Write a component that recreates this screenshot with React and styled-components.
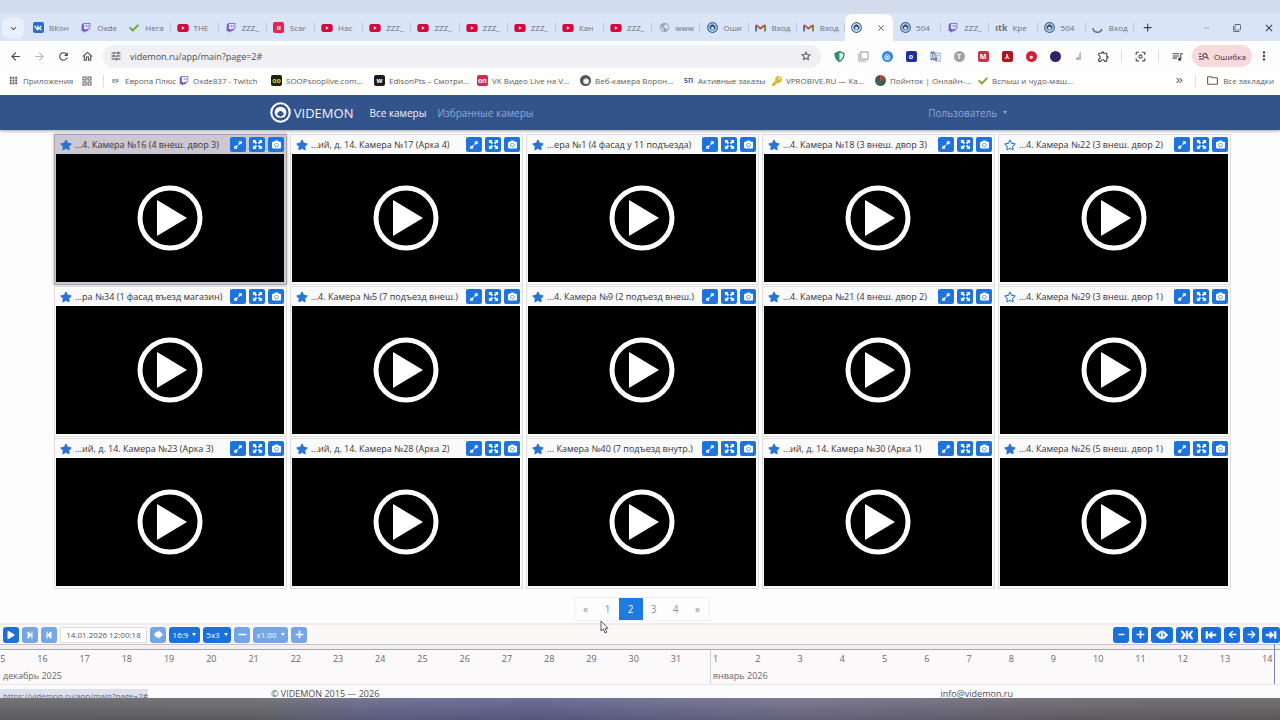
import React, { useState } from 'react';
import styled, { createGlobalStyle } from 'styled-components';
import { SiTwitch } from 'react-icons/si';
import {
    FaVk, FaYoutube, FaStar, FaRegStar, FaCamera, FaPlay, FaStepBackward, FaStepForward,
    FaMinus, FaPlus, FaArrowLeft, FaArrowRight, FaCheck, FaKey, FaShieldAlt,
} from 'react-icons/fa';
import {
    MdArrowBack, MdArrowForward, MdRefresh, MdOutlineHome, MdStarBorder, MdApps, MdMoreVert,
    MdOutlineExtension, MdKeyboardArrowDown, MdClose, MdAdd, MdQueueMusic, MdOutlineFolder,
    MdKeyboardDoubleArrowRight, MdGTranslate, MdPublic, MdOutlineCenterFocusWeak,
    MdOutlineGridView, MdTune, MdManageSearch, MdRemove, MdOutlineFilterNone,
} from 'react-icons/md';


const GlobalStyle = createGlobalStyle`
    * {
        box-sizing: border-box;
    }
    body {
        margin: 0;
        background: #fefdfd;
        font-family: "Open Sans", "Noto Sans", sans-serif;
        color: #3c3c42;
    }
    button, input {
        font-family: inherit;
        margin: 0;
        padding: 0;
        border: 0;
    }
    button {
        background: none;
        display: flex;
        align-items: center;
        justify-content: center;
        color: inherit;
    }
    a {
        color: inherit;
        text-decoration: none;
    }
    svg {
        display: block;
        flex: none;
    }
`

const Page = styled.div`
    height: 100vh;
    display: flex;
    flex-direction: column;
    overflow: hidden;
`

/* browser window */
const TabStrip = styled.div`
    display: flex;
    align-items: flex-end;
    height: 41px;
    padding-left: 2px;
    background: linear-gradient(#d2dcea 0 13px, #d9e4f6 14px);
`

const TabSearch = styled.button`
    width: 22px;
    height: 22px;
    margin-bottom: 2px;
    border-radius: 8px;
    background: #e9f0fa;
    font-size: 11px;
`

const Tabs = styled.div`
    flex: 1;
    display: flex;
    padding-left: 2px;
    min-width: 0;
`

const Tab = styled.a`
    flex: 1 1 0;
    min-width: 0;
    height: 27px;
    display: flex;
    align-items: center;
    gap: 5px;
    padding-left: 6px;
    overflow: hidden;
    white-space: nowrap;
    font-size: 9px;
    color: #6a7078;
    border-radius: 7px 7px 0 0;
    background: ${(props) => (props.$active ? '#fdfdfe' : 'transparent')};
`

const TabIcon = styled.span`
    flex: none;
    display: flex;
    justify-content: center;
    width: 12px;
`

const TabTitle = styled.span`
    font-size: 8px;
`

const TabEdge = styled.i`
    margin-left: auto;
    width: 1px;
    height: 9px;
    background: #bcc8da;
`

const TabClose = styled.button`
    margin: 0 7px 0 auto;
    font-size: 10px;
`

const WindowButtons = styled.div`
    display: flex;
    align-items: center;
    justify-content: space-between;
    width: 146px;
    height: 27px;
    padding: 0 5px 0 7px;
    font-size: 13px;

    button:nth-child(2) {
        margin-left: 26px;
        color: #a5adba;
    }
`

const AddressRow = styled.div`
    display: flex;
    align-items: center;
    height: 30px;
    padding: 0 4px 0 3px;
    background: #fdfdfe;
`

const ToolButton = styled.button`
    width: 24px;
    height: 24px;
    font-size: 13px;
    color: ${(props) => props.$color || '#46474c'};
`

const Omnibox = styled.label`
    flex: 1;
    display: flex;
    align-items: center;
    gap: 8px;
    height: 23px;
    margin: 0 6px 0 4px;
    padding: 0 9px 0 7px;
    border-radius: 12px;
    background: #f0f0f4;
    font-size: 12px;

    input {
        flex: 1;
        min-width: 0;
        background: none;
        font-size: 9px;
        color: #4b4b52;
        outline: none;
    }
`

const Separator = styled.span`
    width: 1px;
    height: 12px;
    margin: 0 6px;
    background: #dcdde4;
`

const ErrorPill = styled.button`
    gap: 4px;
    width: 60px;
    height: 22px;
    margin-left: 3px;
    border-radius: 11px;
    background: #f6d9da;
    font-size: 8px;
    color: #4a2c2e;
`

const MenuButton = styled.button`
    width: 24px;
    font-size: 14px;
`

const Bookmarks = styled.nav`
    display: flex;
    align-items: center;
    height: 24px;
    padding: 0 6px 5px 8px;
    background: #fefefd;
    font-size: 8px;
    color: #5c5c62;
    white-space: nowrap;
`

const Bookmark = styled.a`
    display: flex;
    align-items: center;
    gap: 4px;
    width: ${(props) => props.$width}px;
`

const BookmarksEnd = styled.div`
    display: flex;
    align-items: center;
    gap: 4px;
    margin-left: auto;
`

const Chip = styled.span`
    display: inline-flex;
    align-items: center;
    justify-content: center;
    flex: none;
    width: 11px;
    height: 11px;
    border-radius: ${(props) => (props.$round ? '50%' : '2px')};
    background: ${(props) => props.$bg};
    color: ${(props) => props.$color || '#fff'};
    font-size: 7px;
    font-weight: 700;
    line-height: 1;
`

/* site */
const Site = styled.div`
    position: relative;
    flex: 1;
    min-height: 0;
    display: flex;
    flex-direction: column;
    overflow: hidden;
`

const Navbar = styled.header`
    display: flex;
    align-items: center;
    flex: none;
    height: 35px;
    padding: 0 21%;
    background: #32538c;
    box-shadow: 0 1px 3px rgba(0, 0, 0, 0.35);
    font-size: 10px;
    color: #94a9d3;
`

const Brand = styled.a`
    display: flex;
    align-items: center;
    gap: 3px;
    margin: 0 16px 0 1px;
    font-size: 13px;
    color: #f2f5fb;
`

const NavLink = styled.a`
    margin-right: 11px;
    color: ${(props) => (props.$active ? '#f5f7fc' : '#94a9d3')};
`

const UserMenu = styled.button`
    gap: 6px;
    margin: 0 4px 0 auto;
    font-size: 10px;
`

const Caret = styled.span`
    border: 2px solid transparent;
    border-top: 3px solid currentColor;
    border-bottom: 0;
`

const Cameras = styled.main`
    display: grid;
    grid-template-columns: repeat(5, 1fr);
    gap: 1px 3px;
    padding: 4px 49px 0 54px;
`

const Card = styled.article`
    padding: 0 2px 2px 1px;
    border: 1px solid ${(props) => (props.$selected ? '#aaa3ae' : '#dedcdf')};
    background: ${(props) => (props.$selected ? '#cdc7d1' : '#fbfafb')};
    box-shadow: ${(props) => (props.$selected ? '0 0 3px rgba(70, 60, 80, 0.4)' : 'none')};
`

const CardHead = styled.div`
    display: flex;
    align-items: center;
    gap: 3px;
    height: 19px;
    padding-left: 4px;
    color: #34343a;
    white-space: nowrap;

    h2 {
        flex: 1;
        min-width: 0;
        margin: 0;
        font-size: 9px;
        font-weight: 400;
        line-height: 14px;
    }
`

const StarButton = styled.button`
    font-size: 12px;
    color: #2b75d2;
`

const CardButton = styled.button`
    width: 16px;
    height: 15px;
    border-radius: 2px;
    background: #1f74dc;
    color: #fff;
    font-size: 9px;
`

const Video = styled.button`
    width: 100%;
    height: 128px;
    background: #000;
`

const Pagination = styled.nav`
    display: flex;
    align-self: center;
    margin: 8px 0 2px 3px;
    border: 1px solid #efeef0;
`

const PageLink = styled.a`
    width: ${(props) => (props.$active ? 24 : 22)}px;
    line-height: 22px;
    text-align: center;
    font-size: 10px;
    color: ${(props) => (props.$active ? '#fff' : '#8c9096')};
    background: ${(props) => (props.$active ? '#1f7ae4' : 'transparent')};
`

const PlayerBar = styled.div`
    display: flex;
    align-items: center;
    gap: 3px;
    flex: none;
    height: 22px;
    padding-left: 3px;
    border-top: 2px solid #efebed;
    border-bottom: 1px solid #c9c6c9;
    background: #fbf8f8;
    overflow: hidden;
`

const BarButton = styled.button`
    flex: none;
    gap: 4px;
    width: ${(props) => props.$width || 16}px;
    height: 16px;
    border-radius: 3px;
    background: #1b71da;
    color: #fff;
    font-size: 8px;
    opacity: ${(props) => (props.disabled ? 0.6 : 1)};
`

const TimeInput = styled.input`
    width: 87px;
    height: 16px;
    border: 1px solid #dedce0;
    background: #fff;
    text-align: center;
    font-size: 8px;
    color: #55555b;
`

const Spacer = styled.div`
    flex: 1;
`

const Timeline = styled.div`
    position: relative;
    display: flex;
    flex: none;
    height: 40px;
    padding-top: 1px;
    border-top: 4px solid #f3eff1;
    border-bottom: 1px solid #e8e6e9;
    background: #fcf9fa;
    font-size: 9px;
    color: #66666c;
    box-shadow: inset 0 1px #aaa7aa;
`

const Month = styled.section`
    flex: none;
    margin-left: ${(props) => (props.$cut ? -8 : 0)}px;
    box-shadow: inset 1px 0 #d4d1d5;

    p {
        margin: 0;
        padding: 3px 0 0 ${(props) => (props.$cut ? 11 : 3)}px;
        line-height: 12px;
    }
`

const Days = styled.div`
    display: flex;
    line-height: 17px;

    span {
        width: 3.3vw;
        padding-left: 3px;
    }
`

const NowLine = styled.div`
    position: absolute;
    top: -5px;
    right: 5px;
    width: 1px;
    height: 40px;
    background: #8480b8;
`

const Footer = styled.footer`
    display: flex;
    flex: none;
    justify-content: space-between;
    padding: 0 267px 0 271px;
    font-size: 9px;
    line-height: 17px;
    color: #515158;
    background: #fbfafc;
`

const StatusBubble = styled.div`
    position: absolute;
    left: 0;
    bottom: -6px;
    width: 148px;
    height: 15px;
    padding-left: 3px;
    line-height: 14px;
    font-size: 8px;
    white-space: nowrap;
    background: #dfe0ee;
    color: #5d6070;
`

const Pointer = styled.svg`
    position: absolute;
    top: 525px;
    left: 600px;
`

const Taskbar = styled.div`
    flex: none;
    height: 22px;
    background:
        linear-gradient(rgba(255, 255, 255, 0.12), rgba(0, 0, 0, 0.08)),
        linear-gradient(90deg, #626266 0, #636367 20%, #626286 28%, #595d88 42%, #626388 50%, #6d6985 62%, #696578 72%, #646168 84%, #625f60 100%);
`


const Logo = ({ size = 11, color = '#315b8e' }) => (
    <svg width={size} height={size} viewBox="0 0 20 20">
        <circle cx="10" cy="10" r="8.8" fill="none" stroke={color} strokeWidth="2" />
        <path d="M5.8 13.8A5.6 5.6 0 1 1 14.2 13.8C12.8 15.5 7.2 15.5 5.8 13.8Z" fill={color} />
        <path d="M6.8 12.2Q7.5 8.5 10 8.5Q12.5 8.5 13.2 12.2L10 14Z" fill={color === '#fff' ? '#32538c' : '#dbe5f5'} />
    </svg>
)

const Gmail = () => (
    <svg width="11" height="9" viewBox="0 0 22 18" fill="none" strokeWidth="4">
        <path d="M2 17V4" stroke="#4878c8" />
        <path d="M20 17V4" stroke="#4b9b63" />
        <path d="M2 4L11 11L20 4" stroke="#d64b43" />
    </svg>
)

const Spinner = () => (
    <svg width="11" height="11" viewBox="0 0 12 12">
        <path d="M1 6.5A5 5 0 0 0 10.8 7.5" fill="none" stroke="#536b9b" strokeWidth="1.6" />
    </svg>
)

const Diagonal = () => (
    <svg width="10" height="10" viewBox="0 0 12 12" fill="#fff">
        <path d="M6.5 1.5H10.5V5.5L9.2 4.2L7.3 6.1L5.9 4.7L7.8 2.8Z" />
        <path d="M5.5 10.5H1.5V6.5L2.8 7.8L4.7 5.9L6.1 7.3L4.2 9.2Z" />
    </svg>
)

const Expand = () => (
    <svg width="11" height="11" viewBox="0 0 12 12" fill="#fff">
        {[0, 90, 180, 270].map(angle => (
            <path key={angle} transform={`rotate(${angle} 6 6)`} d="M1 1H4.7L3.7 2.2L5.6 4.1L4.1 5.6L2.2 3.7L1 4.7Z" />
        ))}
    </svg>
)

const PlayCircle = () => (
    <svg width="66" height="66" viewBox="0 0 66 66">
        <circle cx="33" cy="33" r="30" fill="none" stroke="#fff" strokeWidth="5" />
        <path d="M20 15V51L50 33Z" fill="#fff" />
    </svg>
)

const ZoomIcon = ({ paths }) => (
    <svg width="14" height="10" viewBox="0 0 14 10" fill="#fff" stroke="#fff" strokeWidth="0.6">
        <path d={paths} />
    </svg>
)

const yt = <FaYoutube size={12} color="#d5083c" />
const twitch = <SiTwitch size={10} color="#7a55c7" />

const tabs = [
    [<Chip $bg="#2a6fc4"><FaVk size={8} /></Chip>, 'ВКон'], [twitch, 'Oxde'], [<FaCheck size={10} color="#6ea83b" />, 'Нега'],
    [yt, 'THE'], [twitch, 'ZZZ_'], [<Chip $bg="#d72c59">ıı</Chip>, 'Scar'], [yt, 'Нас'], [yt, 'ZZZ_'],
    [yt, 'ZZZ_'], [yt, 'ZZZ_'], [yt, 'ZZZ_'], [yt, 'Кан'], [yt, 'ZZZ_'], [<MdPublic size={11} color="#9ba4ad" />, 'www'],
    [<Logo />, 'Оши'], [<Gmail />, 'Вход'], [<Gmail />, 'Вход'], [<Logo />, ''], [<Logo />, '504'],
    [twitch, 'ZZZ_'], [<b>ıtk</b>, 'Кре'], [<Logo />, '504'], [<Spinner />, 'Вход'],
]

const bookmarks = [
    { width: 69, icon: <Chip $bg="none" $color="#8b8f94">ᴇᴘ</Chip>, title: 'Европа Плюс' },
    { width: 92, icon: twitch, title: 'Oxde837 - Twitch' },
    { width: 103, icon: <Chip $bg="#1f2412" $color="#c6d93b">oo</Chip>, title: 'SOOPsooplive.com...' },
    { width: 103, icon: <Chip $bg="#1c1c1e">w</Chip>, title: 'EdisonPts – Смотри...' },
    { width: 103, icon: <Chip $bg="#d42a4e">on</Chip>, title: 'VK Видео Live на V...' },
    { width: 103, icon: <Chip $round $bg="#55525a">◉</Chip>, title: 'Веб-камера Ворон...' },
    { width: 89, icon: <Chip $bg="none" $color="#4169b4">5П</Chip>, title: 'Активные заказы' },
    { width: 103, icon: <FaKey size={10} color="#d0bd3c" />, title: 'VPROBIVE.RU — Ка...' },
    { width: 103, icon: <Chip $round $bg="conic-gradient(#b84a45, #405b3d, #356f6a, #6c3148)" />, title: 'Пойнток | Онлайн-...' },
    { width: 98, icon: <FaCheck size={10} color="#86a83c" />, title: 'Вспыш и чудо-маш...' },
]

const extensions = [
    ['Защита', <FaShieldAlt size={11} color="#2c9068" />],
    ['Трансляция', <MdOutlineFilterNone size={11} color="#8d8f93" />],
    ['Поиск', <Chip $round $bg="#3287dc">◎</Chip>],
    ['Снимок', <Chip $bg="#1632a0">o</Chip>],
    ['Перевод', <MdGTranslate size={11} color="#7385bd" />],
    ['Загрузка', <Chip $round $bg="#a1a2a6">T</Chip>],
    ['Почта', <Chip $bg="#c93343">M</Chip>],
    ['PDF', <Chip $bg="#ad1524">⅄</Chip>],
    ['Скидки', <Chip $round $bg="#d51f3a">●</Chip>],
    ['VPN', <Chip $round $bg="#332069" />],
    ['Музыка', <svg width="8" height="11" viewBox="0 0 8 11"><path d="M6 0V9H1V6H4V3Z" fill="#c8b4b8" /></svg>],
]

const cameras = [
    '...4. Камера №16 (4 внеш. двор 3)', '...ий, д. 14. Камера №17 (Арка 4)', '...ера №1 (4 фасад у 11 подъезда)',
    '...4. Камера №18 (3 внеш. двор 3)', '...4. Камера №22 (3 внеш. двор 2)', '...ра №34 (1 фасад въезд магазин)',
    '...4. Камера №5 (7 подъезд внеш.)', '...4. Камера №9 (2 подъезд внеш.)', '...4. Камера №21 (4 внеш. двор 2)',
    '...4. Камера №29 (3 внеш. двор 1)', '...ий, д. 14. Камера №23 (Арка 3)', '...ий, д. 14. Камера №28 (Арка 2)',
    '... Камера №40 (7 подъезд внутр.)', '...ий, д. 14. Камера №30 (Арка 1)', '...4. Камера №26 (5 внеш. двор 1)',
]

const december = Array.from({ length: 17 }, (_, i) => i + 15)
const january = Array.from({ length: 14 }, (_, i) => i + 1)


const Browser = () => {
    const [url, setUrl] = useState('videmon.ru/app/main?page=2#')

    return (
        <>
            <TabStrip>
                <TabSearch aria-label="Поиск вкладок"><MdKeyboardArrowDown /></TabSearch>
                <Tabs>
                    {tabs.map(([icon, title], index) => (
                        <Tab key={index} href="#" $active={!title}>
                            <TabIcon>{icon}</TabIcon>
                            {title ? <><TabTitle>{title}</TabTitle><TabEdge /></> : <TabClose aria-label="Закрыть вкладку"><MdClose /></TabClose>}
                        </Tab>
                    ))}
                </Tabs>
                <WindowButtons>
                    <button aria-label="Новая вкладка"><MdAdd /></button>
                    <button aria-label="Свернуть"><MdRemove size={10} /></button>
                    <button aria-label="Развернуть"><MdOutlineFilterNone size={8} /></button>
                    <button aria-label="Закрыть"><MdClose size={12} /></button>
                </WindowButtons>
            </TabStrip>
            <AddressRow>
                <ToolButton aria-label="Назад"><MdArrowBack /></ToolButton>
                <ToolButton aria-label="Вперёд" $color="#b5b7bc"><MdArrowForward /></ToolButton>
                <ToolButton aria-label="Обновить"><MdRefresh /></ToolButton>
                <ToolButton aria-label="Главная"><MdOutlineHome /></ToolButton>
                <Omnibox>
                    <MdTune />
                    <input aria-label="Адрес" value={url} onChange={(e) => setUrl(e.target.value)} />
                    <MdStarBorder />
                </Omnibox>
                {extensions.map(([name, icon]) => (
                    <ToolButton key={name} aria-label={name}>{icon}</ToolButton>
                ))}
                <ToolButton aria-label="Расширения"><MdOutlineExtension /></ToolButton>
                <Separator />
                <ToolButton aria-label="Объектив"><MdOutlineCenterFocusWeak /></ToolButton>
                <Separator />
                <ToolButton aria-label="Медиа"><MdQueueMusic /></ToolButton>
                <ErrorPill><MdManageSearch size={12} />Ошибка</ErrorPill>
                <MenuButton aria-label="Меню"><MdMoreVert /></MenuButton>
            </AddressRow>
            <Bookmarks>
                <Bookmark href="#" $width={73}><MdApps size={11} />Приложения</Bookmark>
                <Bookmark href="#" $width={16}><MdOutlineGridView size={12} /></Bookmark>
                <Separator />
                {bookmarks.map(({ width, icon, title }) => (
                    <Bookmark key={title} href="#" $width={width}>{icon}{title}</Bookmark>
                ))}
                <BookmarksEnd>
                    <MdKeyboardDoubleArrowRight size={11} />
                    <Separator />
                    <MdOutlineFolder size={13} />
                    <a href="#">Все закладки</a>
                </BookmarksEnd>
            </Bookmarks>
        </>
    )
}

const Camera = ({ title, selected, favorite }) => (
    <Card $selected={selected}>
        <CardHead>
            <StarButton aria-label="В избранное">{favorite ? <FaStar /> : <FaRegStar />}</StarButton>
            <h2>{title}</h2>
            <CardButton aria-label="Увеличить"><Diagonal /></CardButton>
            <CardButton aria-label="На весь экран"><Expand /></CardButton>
            <CardButton aria-label="Снимок"><FaCamera /></CardButton>
        </CardHead>
        <Video aria-label="Смотреть"><PlayCircle /></Video>
    </Card>
)

const Player = () => {
    const [time, setTime] = useState('14.01.2026 12:00:18')

    return (
        <PlayerBar>
            <BarButton aria-label="Пуск"><FaPlay /></BarButton>
            <BarButton disabled aria-label="Кадр вперёд"><FaStepForward /></BarButton>
            <BarButton disabled aria-label="Кадр назад"><FaStepBackward /></BarButton>
            <TimeInput aria-label="Время" value={time} onChange={(e) => setTime(e.target.value)} />
            <BarButton disabled aria-label="Перейти">
                <svg width="11" height="11" viewBox="0 0 12 12"><path d="M6 1L11 6L6 11V9H3.5L1 6L3.5 3H6Z" fill="#fff" /></svg>
            </BarButton>
            <BarButton $width={31}>16:9 <Caret /></BarButton>
            <BarButton $width={28}>5x3 <Caret /></BarButton>
            <BarButton disabled aria-label="Медленнее"><FaMinus size={9} /></BarButton>
            <BarButton disabled $width={35}>x1.00 <Caret /></BarButton>
            <BarButton disabled aria-label="Быстрее"><FaPlus size={9} /></BarButton>
            <Spacer />
            <BarButton aria-label="Уменьшить"><FaMinus size={7} /></BarButton>
            <BarButton aria-label="Увеличить"><FaPlus size={9} /></BarButton>
            <BarButton $width={22} aria-label="Раздвинуть"><ZoomIcon paths="M5.5 1V3.2L3.6 5L5.5 6.8V9L1 5ZM6.3 1H7.7V9H6.3ZM8.5 1V3.2L10.4 5L8.5 6.8V9L13 5Z" /></BarButton>
            <BarButton $width={22} aria-label="Сдвинуть"><ZoomIcon paths="M1 1H2.8L5.8 5L2.8 9H1L3.6 5ZM6.3 1H7.7V9H6.3ZM13 1H11.2L8.2 5L11.2 9H13L10.4 5Z" /></BarButton>
            <BarButton $width={20} aria-label="В начало"><ZoomIcon paths="M2 1.5H3.6V8.5H2ZM4 5L8 1.5V4.2H12V5.8H8V8.5Z" /></BarButton>
            <BarButton aria-label="Раньше"><FaArrowLeft size={9} /></BarButton>
            <BarButton aria-label="Позже"><FaArrowRight size={9} /></BarButton>
            <BarButton $width={18} aria-label="В конец"><ZoomIcon paths="M12 1.5H10.4V8.5H12ZM10 5L6 1.5V4.2H2V5.8H6V8.5Z" /></BarButton>
        </PlayerBar>
    )
}

const App = () => (
    <Page>
        <GlobalStyle />
        <Browser />
        <Site>
            <Navbar>
                <Brand href="#"><Logo size={21} color="#fff" />VIDEMON</Brand>
                <NavLink href="#" $active>Все камеры</NavLink>
                <NavLink href="#">Избранные камеры</NavLink>
                <UserMenu>Пользователь <Caret /></UserMenu>
            </Navbar>
            <Cameras>
                {cameras.map((title, index) => (
                    <Camera key={title} title={title} selected={index === 0} favorite={index !== 4 && index !== 9} />
                ))}
            </Cameras>
            <Pagination>
                {['«', '1', '2', '3', '4', '»'].map(page => (
                    <PageLink key={page} href="#" $active={page === '2'}>{page}</PageLink>
                ))}
            </Pagination>
            <Player />
            <Timeline>
                <Month $cut>
                    <Days>{december.map(day => <span key={day}>{day}</span>)}</Days>
                    <p>декабрь 2025</p>
                </Month>
                <Month>
                    <Days>{january.map(day => <span key={day}>{day}</span>)}</Days>
                    <p>январь 2026</p>
                </Month>
                <NowLine />
            </Timeline>
            <Footer>
                <span>© VIDEMON 2015 — 2026</span>
                <a href="#">info@videmon.ru</a>
            </Footer>
            <StatusBubble>https://videmon.ru/app/main?page=2#</StatusBubble>
            <Pointer width="9" height="14" viewBox="0 0 9 14">
                <path d="M1 1V11L3.3 8.9L5 13L6.8 12.2L5.1 8.3H8Z" fill="#fff" stroke="#555" strokeWidth="1" />
            </Pointer>
        </Site>
        <Taskbar />
    </Page>
)

export default App
